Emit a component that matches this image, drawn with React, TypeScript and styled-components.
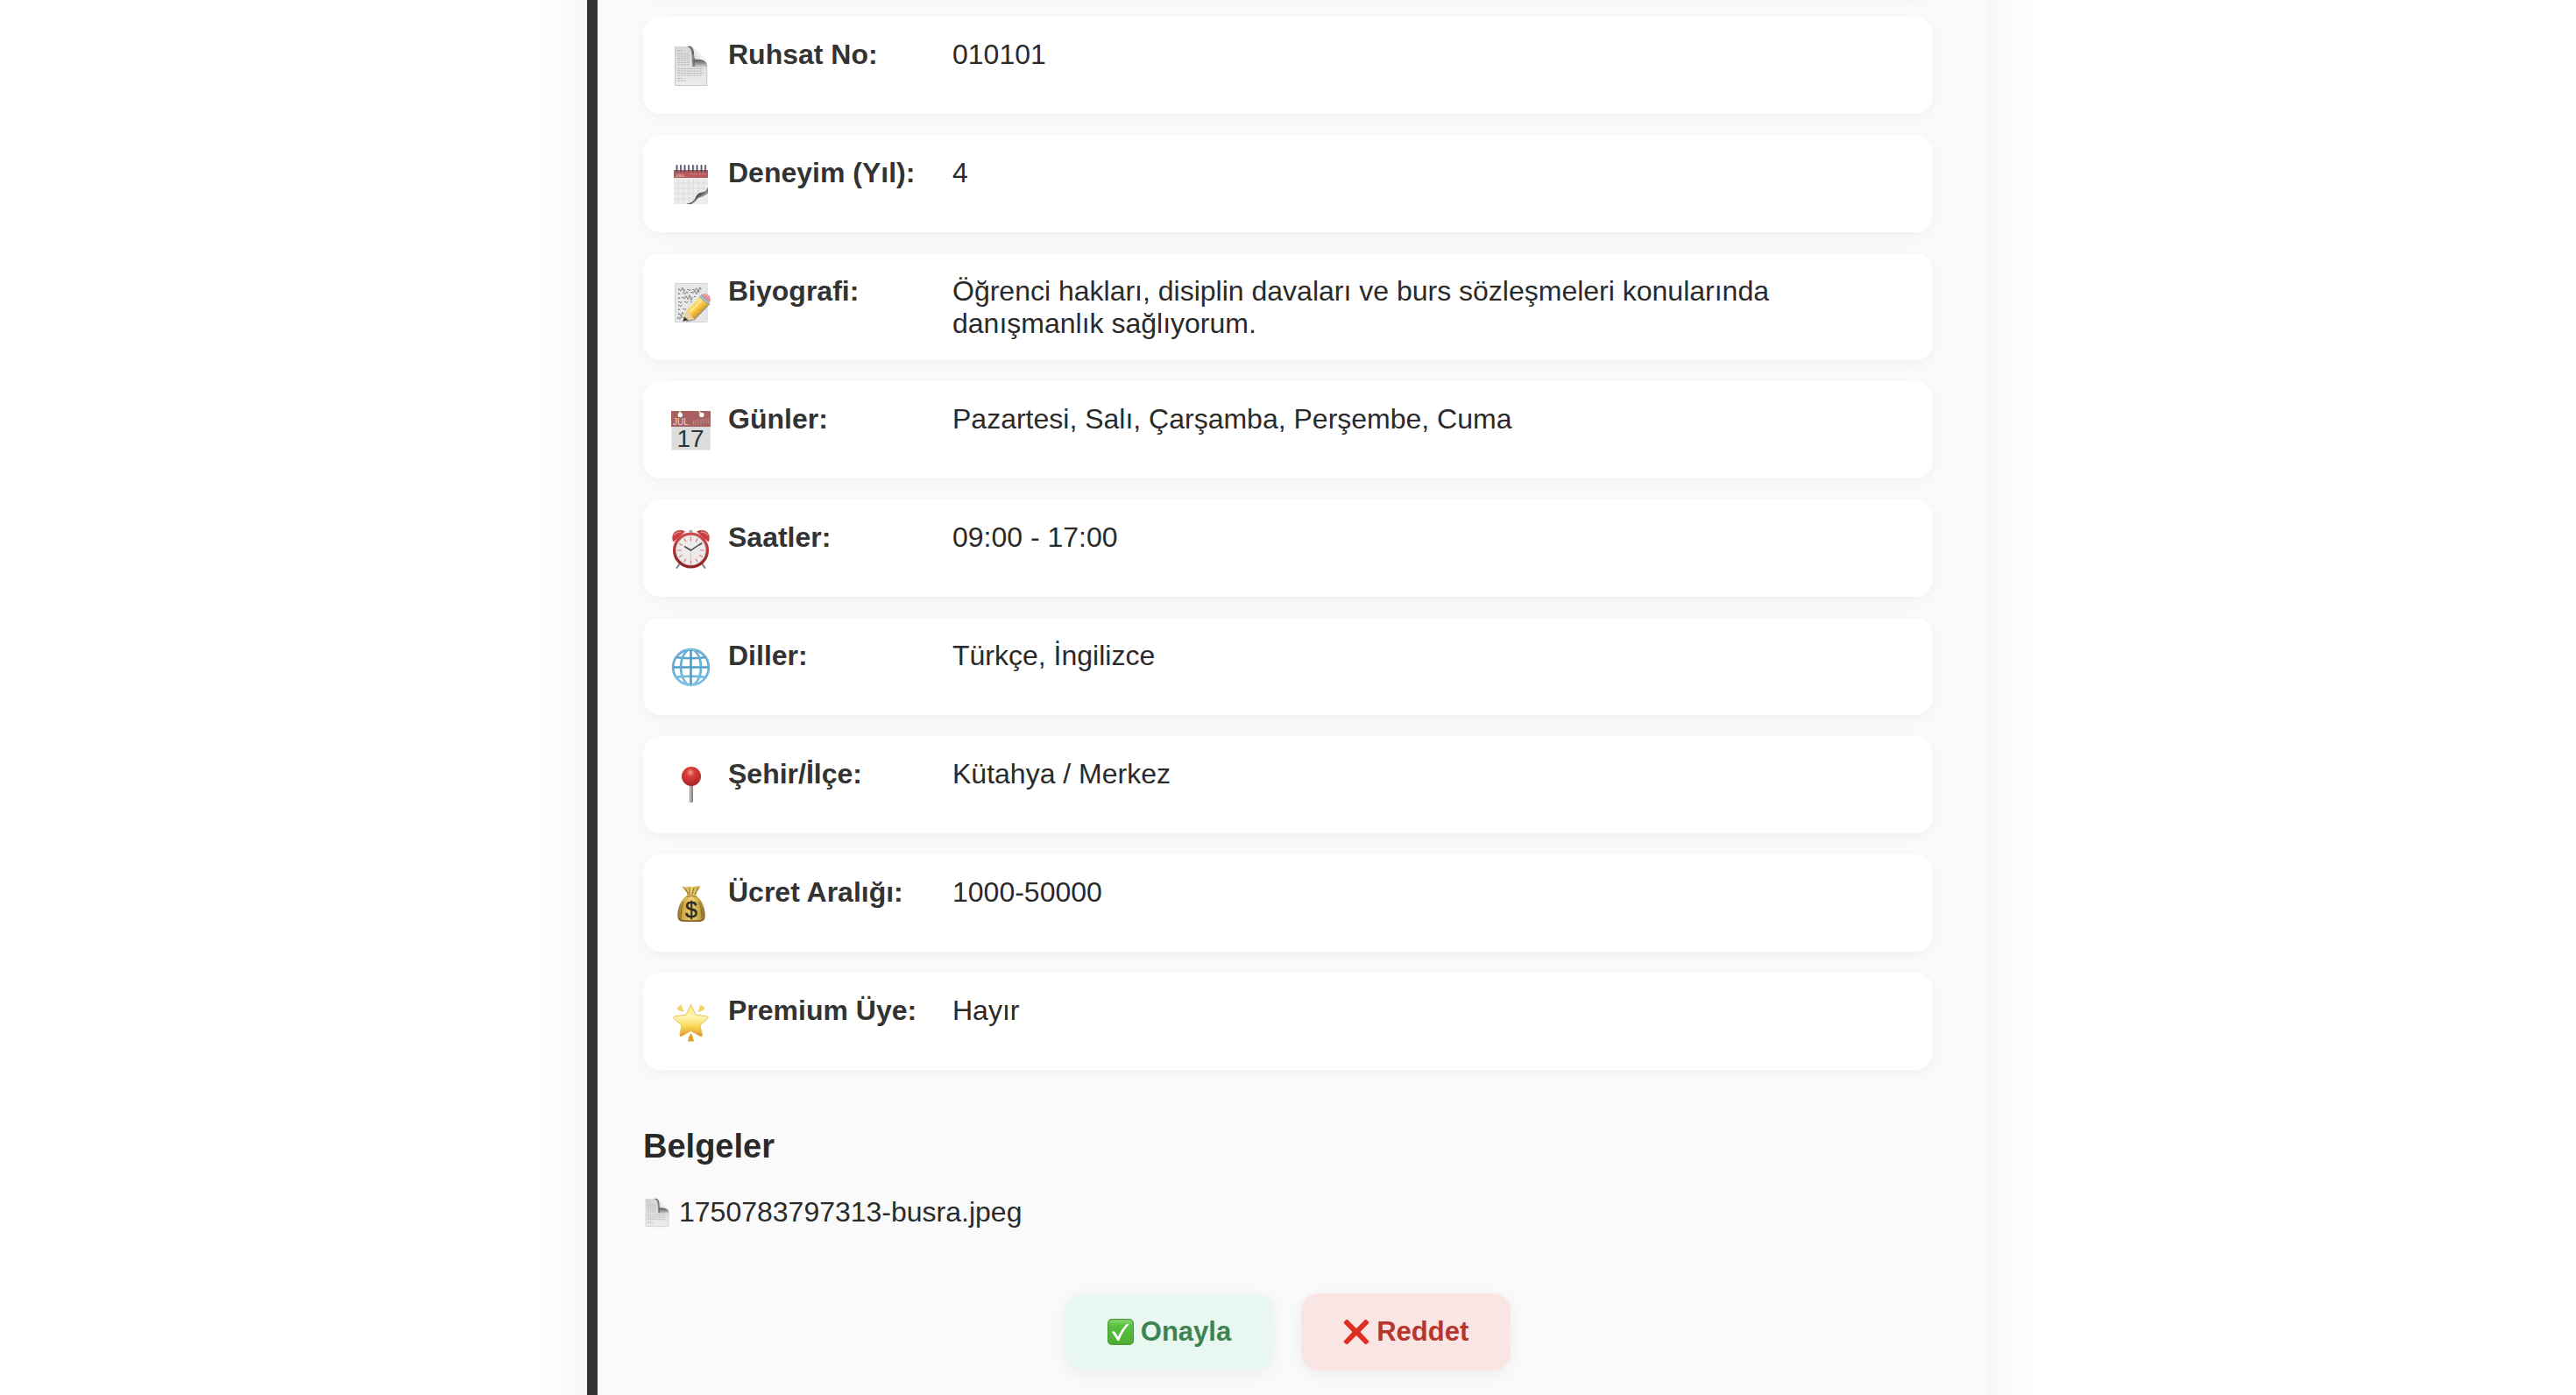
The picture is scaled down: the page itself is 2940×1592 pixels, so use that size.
import React from "react";
import styled, { createGlobalStyle } from "styled-components";

const GlobalStyle = createGlobalStyle`
  *, *::before, *::after { box-sizing: border-box; }
  body {
    margin: 0;
    background: #ffffff;
    color: #2a2a2a;
    font-family: "Liberation Sans", Arial, Helvetica, sans-serif;
    font-size: 32px;
    line-height: 37px;
  }
`;

const Page = styled.main`
  display: flex;
  justify-content: center;
  min-height: 100vh;
  overflow: hidden;
`;

/* The panel runs past both window edges, so only its sides show a shadow. */
const Panel = styled.section`
  display: flex;
  flex-direction: column;
  width: 100%;
  max-width: 1600px;
  margin: -96px 0;
  padding: 51px 64px 124px 52px;
  border-left: 12px solid #333333;
  background: #fafafa;
  box-shadow: 0 16px 64px rgba(0, 0, 0, 0.07);
`;

const List = styled.ul`
  display: flex;
  flex-direction: column;
  gap: 24px;
  margin: 0;
  padding: 0;
  list-style: none;
`;

const Card = styled.li`
  display: grid;
  grid-template-columns: 65px 256px 1fr;
  align-items: start;
  min-height: 40px;
  padding: 0 32px;
  border-radius: 20px;
  background: #ffffff;
  box-shadow: 0 4px 16px rgba(0, 0, 0, 0.04);
`;

const IconCell = styled.span`
  display: flex;
  padding: 34px 0 32px;
`;

const Label = styled.strong`
  padding: 25px 0 23px;
  color: #333333;
  font-weight: 700;
`;

const Value = styled.span`
  padding: 25px 0 23px;
`;

const Heading = styled.h2`
  margin: 65px 0 0;
  font-size: 38px;
  line-height: 45px;
  font-weight: 700;
`;

const FileLink = styled.a`
  display: flex;
  align-items: center;
  align-self: flex-start;
  gap: 9px;
  margin-top: 34px;
  color: #2a2a2a;
  text-decoration: none;
`;

const Actions = styled.div`
  display: flex;
  justify-content: center;
  gap: 32px;
  margin-top: 74px;
`;

const ActionButton = styled.button<{ $tone: "approve" | "reject" }>`
  display: flex;
  align-items: center;
  gap: 8px;
  height: 88px;
  padding: 0 48px;
  border: 0;
  border-radius: 20px;
  background: ${({ $tone }) => ($tone === "approve" ? "#e8f7ef" : "#f9e6e4")};
  color: ${({ $tone }) => ($tone === "approve" ? "#3e8451" : "#b7352f")};
  font: 700 31px/36px "Liberation Sans", Arial, sans-serif;
  box-shadow: 0 4px 20px rgba(0, 0, 0, 0.06);
  cursor: pointer;
`;

const Drawing = styled.svg`
  flex: none;
  overflow: visible;
`;

const Glyph = ({ size = 45, box = 45, children }: { size?: number; box?: number; children: React.ReactNode }) => (
  <Drawing width={size} height={size} viewBox={`0 0 ${box} ${box}`} aria-hidden="true">
    {children}
  </Drawing>
);

const DocumentIcon = ({ size }: { size?: number }) => (
  <Glyph size={size}>
    <defs>
      <linearGradient id="paper" x1="0" y1="0" x2="0" y2="1">
        <stop offset="0" stopColor="#d6d6d6" />
        <stop offset="1" stopColor="#ececec" />
      </linearGradient>
      <linearGradient id="flap" x1="0" y1="0.7" x2="0.6" y2="0.3">
        <stop offset="0" stopColor="#b0b0b0" />
        <stop offset="0.5" stopColor="#e6e6e6" />
        <stop offset="1" stopColor="#f8f8f8" />
      </linearGradient>
      <linearGradient id="under" x1="0" y1="0" x2="0" y2="1">
        <stop offset="0" stopColor="#4a4a4a" />
        <stop offset="0.5" stopColor="#8c8c8c" />
        <stop offset="1" stopColor="#dcdcdc" />
      </linearGradient>
    </defs>
    <path d="M4 0H22Q26 2 27 15Q38 14 41 21V45H4Z" fill="url(#paper)" />
    <path d="M4.500 0V44.500H40.800V21" fill="none" stroke="#c9c9c9" />
    <path
      d="M7 4.500h6M7 8.500h13M7 11h14M7 13.500h14M7 16h14M7 18.500h14M7 21h14M7 25.500h30M7 28h29M7 30.500h30M7 33h28M7 36.500h6M7 39h10"
      stroke="#bcbcbc"
      strokeDasharray="3 .6"
      strokeWidth="1"
    />
    <path d="M26 13.500Q38 13 41 20V24H24Z" fill="url(#under)" />
    <path d="M19 0H22Q27 2 27 23H24.500Q23.500 17 23.500 10Q23 2 19 0Z" fill="#6f6f6f" opacity=".8" />
    <path d="M22 0Q27 3 27 15Q37 14 41 19Q41 16 37 12L27 2Q25 0 22 0Z" fill="url(#flap)" />
    <path d="M19 .4H22Q25 2 25.500 9" fill="none" stroke="#606060" strokeWidth="1.400" />
  </Glyph>
);

const SpiralCalendarIcon = () => (
  <Glyph>
    <defs>
      <linearGradient id="curl" x1="0.35" y1="0.4" x2="0.8" y2="0.8">
        <stop offset="0" stopColor="#c8c8c8" />
        <stop offset="0.3" stopColor="#4a4a4a" />
        <stop offset="0.6" stopColor="#8a8a8a" />
        <stop offset="1" stopColor="#e2e2e2" />
      </linearGradient>
    </defs>
    <path d="M3 6H42V45H3Z" fill="#ececec" />
    <path d="M3 6H42V15H3Z" fill="#b75c5b" />
    <path d="M23 12V9m3 3V9m3 3V9m4 3V9m3 3V9m3 3V9" stroke="#cc8583" strokeWidth="1" />
    <path d="M5.500 13.500h1.500v-3M9 10.500v3h2v-3M13 10.500v3h2" fill="none" stroke="#e2b4b3" strokeWidth=".9" />
    <path d="M8.500 16v28M14 16v28M20 16v28M25.500 16v28M31 16v20M37 16v16M3 21h39M3 27h38M3 33h31M3 39h26" stroke="#dadada" strokeWidth=".9" />
    <path d="M17 45Q26 43 28 37Q30 32 35 31.500Q40 31 42 26V45Z" fill="url(#curl)" />
    <path d="M23 45Q28 42 31 38Q36 37 42 33V45Z" fill="#ececec" />
    <path d="M6.500 1v7M11 1v7M15.500 1v7M20 1v7M25 1v7M29.500 1v7M34.500 1v7M39 1v7" stroke="#4d5260" strokeWidth="1.800" strokeLinecap="round" />
    <path d="M7.500 1v5M12 1v5M16.500 1v5M21 1v5M26 1v5M30.500 1v5M35.500 1v5M40 1v5" stroke="#aeb5c4" strokeWidth=".7" />
  </Glyph>
);

const MemoIcon = () => (
  <Glyph>
    <defs>
      <linearGradient id="pencil" x1="0.3" y1="0.3" x2="0.7" y2="0.75">
        <stop offset="0" stopColor="#ffe487" />
        <stop offset="0.5" stopColor="#f8ca45" />
        <stop offset="1" stopColor="#c98a1e" />
      </linearGradient>
    </defs>
    <path d="M4.500 .5H41V44.500H4.500Z" fill="#e7e7e7" stroke="#d2d2d2" />
    <path
      d="M8 8q1-3 2 0t2-1 2 1 1-1m3 1q1-2 2 0t2-1m2 1q1-2 2 0t2-1 2 1 2-1 2 1M8 13q1-3 2 0m3-1q1-2 2 0t2-1 2 1m3-1q1-2 2 0t2-1 2 1 2-1 2 1M8 18q1-3 2 0m2-1q1-2 2 0t2-1 2 1 2-1 2 1 2-1m2 0q1-2 2 0M8 22q1-2 2 0t2-1m3 1q1-2 2 0t2-1m3 1q1-2 2 0M8 26q1-2 2 0t2-1M8 31q1-3 2 0m3-1q1-2 2 0t2-1M8 36q1-3 2 0t2-1 2 1M7 41q1-4 2-1t2-1 2 1"
      fill="none"
      stroke="#777777"
      strokeWidth=".9"
    />
    <path d="M17 44.500L27 42L44.500 24L42 19L20 38Z" fill="#444444" opacity=".5" />
    <path d="M17 32L32.500 15.500L42.500 24L26.500 41L13.500 43.500Z" fill="url(#pencil)" />
    <path d="M20.500 34.500L36 18" stroke="#ffe99c" strokeWidth="1.800" />
    <path d="M17 32L21 33L23 37L26.500 41L13.500 43.500Z" fill="#edd09d" />
    <path d="M15 38.500L19.500 42.300L13.300 43.800Z" fill="#333333" />
    <path d="M32 16L34.500 13L44 21.500L42 24.500Z" fill="#8ea3b4" />
    <path d="M33.500 15L43 23" stroke="#d8e2e8" strokeWidth="1" />
    <path d="M34.500 13.500L36 12.500Q40 11.500 43.500 14.500Q46 18 44 21.800Z" fill="#e68c93" />
    <path d="M37 13.700q4-1 5.500 3" fill="none" stroke="#f7bcc0" />
  </Glyph>
);

const CalendarIcon = () => (
  <Glyph>
    <path d="M0 0H45V45H0Z" fill="#dcdcdc" />
    <path d="M0 0H45V18H0Z" fill="#a76160" />
    <path d="M.5 18V44.500H44.500V18" fill="none" stroke="#e9e9e9" />
    <circle cx="10.300" cy="4.500" r="2.700" fill="#ffffff" />
    <circle cx="34.800" cy="4.500" r="2.700" fill="#ffffff" />
    <path d="M10 4V0M34 4L32 0" stroke="#f5eeee" strokeWidth="1.400" />
    <path d="M25.500 15.500v-5M28 15.500V10M31 15.500V9.500M34 15.500V9M37 15V9M40 14.500V8M43 14.500V8" stroke="#c18a89" strokeWidth="1" />
    <text x="2" y="15.500" fill="#ead6d5" fontFamily="Liberation Sans, sans-serif" fontSize="10">JUL</text>
    <text x="22" y="41" textAnchor="middle" fill="#333333" fontFamily="Liberation Sans, sans-serif" fontSize="28">17</text>
  </Glyph>
);

const ClockIcon = () => (
  <Glyph>
    <defs>
      <linearGradient id="rim" x1="0" y1="0" x2="0" y2="1">
        <stop offset="0" stopColor="#d24b4c" />
        <stop offset="1" stopColor="#8f2021" />
      </linearGradient>
    </defs>
    <path d="M10 39L6.500 44M35 39L38.500 44" stroke="#76808a" strokeWidth="2" strokeLinecap="round" />
    <path d="M20.500 .8h4v3h-4z" fill="#aab1b5" />
    <path d="M2 14C-1 5 6-2 16 2.500L9 9L3 14Z" fill="#c63f44" />
    <path d="M43 14C46 5 39-2 29 2.500L36 9L42 14Z" fill="#c63f44" />
    <path d="M3 7q3-4 8-4M42 7q-3-4-8-4" fill="none" stroke="#e5898a" strokeWidth="1.300" />
    <circle cx="22.500" cy="24" r="18.800" fill="#ececec" stroke="url(#rim)" strokeWidth="3.500" />
    <circle cx="22.500" cy="24" r="17" fill="none" stroke="#c9c4c4" strokeWidth=".7" />
    <path
      d="M22.500 8.500v5M22.500 39.500v-5M7 24h5M38 24h-5M14.750 10.600l2.200 3.800M30.250 10.600l-2.200 3.800M14.750 37.400l2.200-3.800M30.250 37.400l-2.200-3.800M9.100 16.250l3.800 2.200M35.900 16.250l-3.800 2.200M9.100 31.750l3.800-2.200M35.900 31.750l-3.800-2.200"
      stroke="#e27c7c"
      strokeWidth="1.200"
    />
    <path d="M22.500 24v12" stroke="#dcc9a6" strokeWidth="1" />
    <path d="M15 19.500L22.500 24L35 15.500" fill="none" stroke="#494949" strokeWidth="1.500" />
  </Glyph>
);

const GlobeIcon = () => (
  <Glyph>
    <defs>
      <linearGradient id="sea" x1="0" y1="0" x2="0" y2="1">
        <stop offset="0" stopColor="#5aa5cc" />
        <stop offset="0.5" stopColor="#489bc9" />
        <stop offset="1" stopColor="#6bb9dd" />
      </linearGradient>
    </defs>
    <g fill="none" stroke="url(#sea)" strokeWidth="2.600">
      <circle cx="22.500" cy="22.500" r="20.400" />
      <ellipse cx="22.500" cy="22.500" rx="11.500" ry="20.400" />
      <path d="M4.500 11Q22.500 13.500 40.500 11M4.500 34Q22.500 31.500 40.500 34" />
    </g>
    <path d="M21.200 2h2.600v41h-2.600zM2 21.200h41v2.600H2z" fill="#4e9fc9" />
    <g fill="none" stroke="#b5e0f2" strokeWidth=".5">
      <circle cx="22.500" cy="22.500" r="20.800" />
      <ellipse cx="22.500" cy="22.500" rx="11.700" ry="20.500" />
    </g>
  </Glyph>
);

const PinIcon = () => (
  <Glyph>
    <defs>
      <radialGradient id="ball" cx="0.45" cy="0.3" r="0.7">
        <stop offset="0" stopColor="#f39a8c" />
        <stop offset="0.3" stopColor="#dc3e3a" />
        <stop offset="1" stopColor="#a62626" />
      </radialGradient>
    </defs>
    <path d="M21 20h4v21q-2 2-4 0z" fill="#8d8482" />
    <path d="M22.500 22v19" stroke="#d8d1ce" strokeWidth="1" />
    <circle cx="23" cy="12" r="11" fill="url(#ball)" />
  </Glyph>
);

const MoneyBagIcon = () => (
  <Glyph>
    <defs>
      <linearGradient id="bag" x1="0" y1="0" x2="1" y2="0">
        <stop offset="0" stopColor="#8a682c" />
        <stop offset="0.2" stopColor="#cda94c" />
        <stop offset="0.5" stopColor="#ecd372" />
        <stop offset="0.8" stopColor="#c9a445" />
        <stop offset="1" stopColor="#85632a" />
      </linearGradient>
    </defs>
    <path d="M12 2.500L17 3.500L21 2.300L25 3.300L29 2.300L33.500 2.500L28.500 10V13C35 18 38.500 26 38.700 36Q39 42.700 33 42.700H13Q7 42.700 7.300 36C7.500 26 11 18 18 13V10Z" fill="url(#bag)" />
    <path d="M16 5l4 7M21 4v8M26 4l-2 8M31 4l-4 8M17.500 14.500Q23 12 28.500 14.500M14 20Q11 28 11 38M32 20Q35 28 35 38" fill="none" stroke="#8d692c" strokeWidth="1" />
    <path d="M9 39Q11 42 15 42H31Q36 42 37.500 39" fill="none" stroke="#7d5923" strokeWidth="1.400" />
    <text x="23" y="37.500" textAnchor="middle" fill="#2f2a20" stroke="#2f2a20" strokeWidth=".5" fontFamily="Liberation Sans, sans-serif" fontSize="25">$</text>
  </Glyph>
);

const StarIcon = () => (
  <Glyph>
    <defs>
      <linearGradient id="star" x1="0" y1="0" x2="0" y2="1">
        <stop offset="0" stopColor="#fbe98d" />
        <stop offset="0.4" stopColor="#fdf6ad" />
        <stop offset="0.7" stopColor="#f7d650" />
        <stop offset="1" stopColor="#dd9131" />
      </linearGradient>
    </defs>
    <path
      d="M22.500 2.500L28 14L41.500 16Q43 17 41.500 18.500L33 26L35.500 37.500Q35 39.500 33 38.500L22.500 32.500L12 38.500Q10 39.500 9.800 37.500L12 26L3.200 18.500Q2 17 3.500 16L17 14Z"
      fill="url(#star)"
      stroke="#eab94a"
      strokeWidth=".9"
      strokeLinejoin="round"
    />
    <path d="M11.500 2.500Q13 6 14.500 11Q10 10.500 6.500 7.500Q8 4 11.500 2.500Z" fill="#f2d565" />
    <path d="M33.500 2.500Q32 6 30.500 11Q35 10.500 38.500 7.500Q37 4 33.500 2.500Z" fill="#f2d565" />
    <path d="M22.500 35Q25.500 39 26 44.500H19Q19.500 39 22.500 35Z" fill="#e0a034" />
  </Glyph>
);

const CheckIcon = () => (
  <Glyph size={30} box={30}>
    <defs>
      <linearGradient id="tick" x1="0" y1="0" x2="0" y2="1">
        <stop offset="0" stopColor="#8fdc78" />
        <stop offset="0.25" stopColor="#58c13f" />
        <stop offset="1" stopColor="#4eae33" />
      </linearGradient>
    </defs>
    <rect x=".6" y=".6" width="28.800" height="28.800" rx="4.500" fill="url(#tick)" stroke="#4a9a37" strokeWidth="1.200" />
    <path d="M5 14.800Q7 13.500 8.200 14.800L12 20.500Q17 10 22 6Q23.500 5.500 24.500 6.500Q18 13 13.500 24.500Q12 25.500 11 24.500Z" fill="#ffffff" />
  </Glyph>
);

const CrossIcon = () => (
  <Glyph size={30} box={30}>
    <path
      d="M4.500 .5L15 11L25.500 .5Q28 2 29.700 4.500L19.500 15L29.700 26Q28 28.500 25.500 29.500L15 19L4.500 29.500Q2 28.500 .3 26L10.500 15L.3 4.500Q2 2 4.500 .5Z"
      fill="#dc2f20"
    />
  </Glyph>
);

const rows = [
  { icon: <DocumentIcon />, label: "Ruhsat No:", value: "010101" },
  { icon: <SpiralCalendarIcon />, label: "Deneyim (Yıl):", value: "4" },
  {
    icon: <MemoIcon />,
    label: "Biyografi:",
    value: "Öğrenci hakları, disiplin davaları ve burs sözleşmeleri konularında danışmanlık sağlıyorum.",
  },
  { icon: <CalendarIcon />, label: "Günler:", value: "Pazartesi, Salı, Çarşamba, Perşembe, Cuma" },
  { icon: <ClockIcon />, label: "Saatler:", value: "09:00 - 17:00" },
  { icon: <GlobeIcon />, label: "Diller:", value: "Türkçe, İngilizce" },
  { icon: <PinIcon />, label: "Şehir/İlçe:", value: "Kütahya / Merkez" },
  { icon: <MoneyBagIcon />, label: "Ücret Aralığı:", value: "1000-50000" },
  { icon: <StarIcon />, label: "Premium Üye:", value: "Hayır" },
];

export default function App() {
  return (
    <>
      <GlobalStyle />
      <Page>
        <Panel>
          <List>
            {/* card above the fold: only its shadow reaches the window */}
            <Card aria-hidden="true" />
            {rows.map((row) => (
              <Card key={row.label}>
                <IconCell>{row.icon}</IconCell>
                <Label>{row.label}</Label>
                <Value>{row.value}</Value>
              </Card>
            ))}
          </List>
          <Heading>Belgeler</Heading>
          <FileLink href="#belge">
            <DocumentIcon size={32} />
            1750783797313-busra.jpeg
          </FileLink>
          <Actions>
            <ActionButton type="button" $tone="approve">
              <CheckIcon />
              Onayla
            </ActionButton>
            <ActionButton type="button" $tone="reject">
              <CrossIcon />
              Reddet
            </ActionButton>
          </Actions>
        </Panel>
      </Page>
    </>
  );
}
